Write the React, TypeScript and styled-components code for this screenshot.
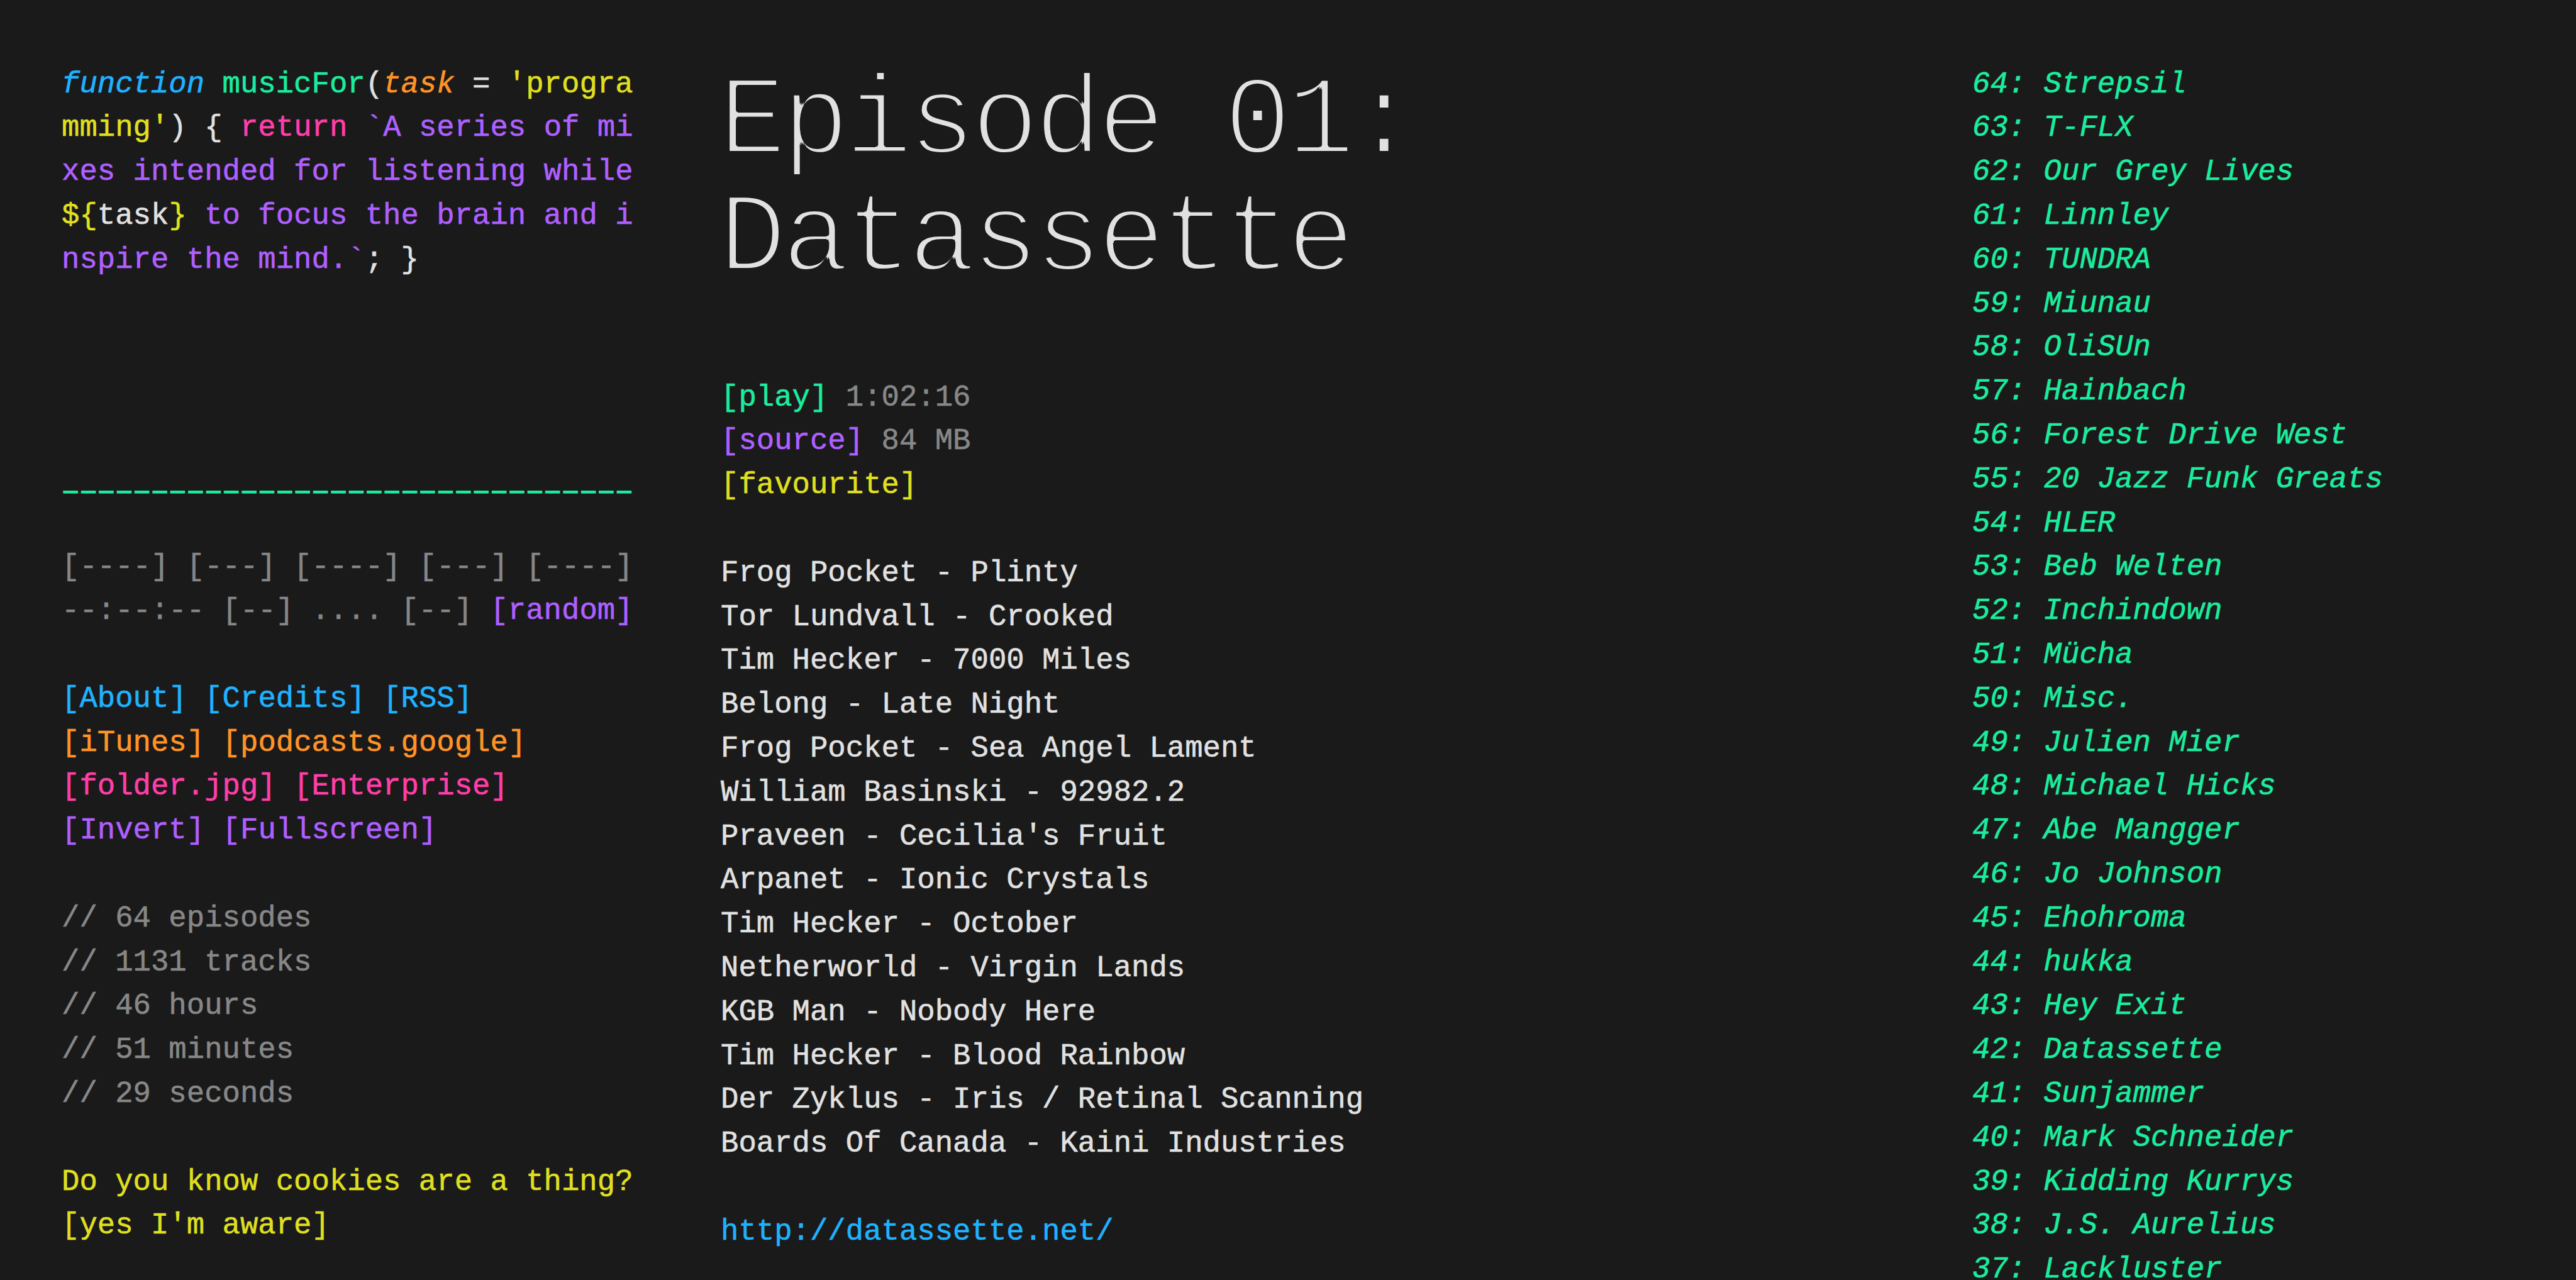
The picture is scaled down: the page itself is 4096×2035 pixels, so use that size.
import React from 'react';
import styled, { createGlobalStyle, css } from 'styled-components';

const colors = {
  bg: '#1a1a1a',
  fg: '#e1e1e1',
  grey: '#878787',
  green: '#1bec9f',
  blue: '#1fb2ff',
  orange: '#ff9326',
  yellow: '#dfdf20',
  purple: '#af5fff',
  pink: '#ff3ea9',
};

type Tone = keyof typeof colors;

const GlobalStyle = createGlobalStyle`
  body {
    margin: 0;
    background: ${colors.bg};
    overflow: hidden;
  }
`;

const Page = styled.main`
  display: grid;
  grid-template-columns: 912px 1854px 1fr;
  column-gap: 136px;
  box-sizing: border-box;
  width: 4096px;
  height: 2035px;
  padding: 99.6px 0 0 98px;
  overflow: hidden;
  background: ${colors.bg};
  color: ${colors.fg};
  font-family: 'Liberation Mono', monospace;
  font-size: 47.32px;
  line-height: 69.8px;
  white-space: pre;
  -webkit-text-stroke: 0.6px currentColor;
`;

const Column = styled.section`
  display: flex;
  flex-direction: column;
`;

const Block = styled.div<{ $tone?: Tone; $gap?: number }>`
  color: ${({ $tone = 'fg' }) => colors[$tone]};
  margin-bottom: ${({ $gap = 69.8 }) => $gap}px;
`;

const Line = styled.div`
  height: 69.8px;
`;

const Tint = styled.span<{ $tone: Tone; $italic?: boolean }>`
  color: ${({ $tone }) => colors[$tone]};
  ${({ $italic }) =>
    $italic &&
    css`
      font-style: italic;
    `}
`;

const Link = styled.a<{ $tone: Tone }>`
  color: ${({ $tone }) => colors[$tone]};
  cursor: pointer;
`;

const Rule = styled.div`
  height: 69.8px;
  margin: 287.2px 0 61.8px;
  color: ${colors.green};
  font-size: 34px;
  letter-spacing: 7.99px;
  text-indent: 4px;
  -webkit-text-stroke: 3px ${colors.green};
`;

const Title = styled.h1`
  margin: 3px 0 122px -4px;
  font-size: 180px;
  font-weight: 400;
  line-height: 186.5px;
  letter-spacing: -7.6px;
  -webkit-text-stroke: 0;
  filter: url(#hairline);
`;

const HiddenDefs = styled.svg`
  position: absolute;
  width: 0;
  height: 0;
`;

const EpisodeList = styled.ol`
  margin: 0;
  padding: 0;
  list-style: none;
  color: ${colors.green};
  font-style: italic;
`;

const Episode = styled.li`
  height: 69.8px;
`;

const tracks = [
  'Frog Pocket - Plinty',
  'Tor Lundvall - Crooked',
  'Tim Hecker - 7000 Miles',
  'Belong - Late Night',
  'Frog Pocket - Sea Angel Lament',
  'William Basinski - 92982.2',
  "Praveen - Cecilia's Fruit",
  'Arpanet - Ionic Crystals',
  'Tim Hecker - October',
  'Netherworld - Virgin Lands',
  'KGB Man - Nobody Here',
  'Tim Hecker - Blood Rainbow',
  'Der Zyklus - Iris / Retinal Scanning',
  'Boards Of Canada - Kaini Industries',
];

const episodes = [
  'Strepsil',
  'T-FLX',
  'Our Grey Lives',
  'Linnley',
  'TUNDRA',
  'Miunau',
  'OliSUn',
  'Hainbach',
  'Forest Drive West',
  '20 Jazz Funk Greats',
  'HLER',
  'Beb Welten',
  'Inchindown',
  'Mücha',
  'Misc.',
  'Julien Mier',
  'Michael Hicks',
  'Abe Mangger',
  'Jo Johnson',
  'Ehohroma',
  'hukka',
  'Hey Exit',
  'Datassette',
  'Sunjammer',
  'Mark Schneider',
  'Kidding Kurrys',
  'J.S. Aurelius',
  'Lackluster',
];

const stats = ['64 episodes', '1131 tracks', '46 hours', '51 minutes', '29 seconds'];

const menu: { tone: Tone; items: string[] }[] = [
  { tone: 'blue', items: ['About', 'Credits', 'RSS'] },
  { tone: 'orange', items: ['iTunes', 'podcasts.google'] },
  { tone: 'pink', items: ['folder.jpg', 'Enterprise'] },
  { tone: 'purple', items: ['Invert', 'Fullscreen'] },
];

// roughly a circle of radius 3.5
const offsets = [
  [4, 0],
  [-3, 0],
  [0, 3],
  [0, -4],
  [3, 2],
  [3, -3],
  [-2, 2],
  [-2, -3],
];

// keeps only what all the shifted copies share, which thins the letters evenly
const HairlineFilter: React.FC = () => (
  <HiddenDefs aria-hidden="true">
    <filter id="hairline" x="0" y="0" width="100%" height="100%" colorInterpolationFilters="sRGB">
      {offsets.map(([dx, dy], i) => (
        <React.Fragment key={i}>
          <feOffset in="SourceGraphic" dx={dx} dy={dy} result={`shift${i}`} />
          <feComposite
            in={i === 0 ? 'SourceGraphic' : `thin${i - 1}`}
            in2={`shift${i}`}
            operator="in"
            result={`thin${i}`}
          />
        </React.Fragment>
      ))}
    </filter>
  </HiddenDefs>
);

const Intro: React.FC = () => (
  <Block $gap={0}>
    <Line>
      <Tint $tone="blue" $italic>function</Tint> <Tint $tone="green">musicFor</Tint>(
      <Tint $tone="orange" $italic>task</Tint> = <Tint $tone="yellow">'progra</Tint>
    </Line>
    <Line>
      <Tint $tone="yellow">mming'</Tint>) {'{'} <Tint $tone="pink">return</Tint>{' '}
      <Tint $tone="purple">`A series of mi</Tint>
    </Line>
    <Line>
      <Tint $tone="purple">xes intended for listening while</Tint>
    </Line>
    <Line>
      <Tint $tone="yellow">{'${'}</Tint>task<Tint $tone="yellow">{'}'}</Tint>
      <Tint $tone="purple"> to focus the brain and i</Tint>
    </Line>
    <Line>
      <Tint $tone="purple">nspire the mind.`</Tint>; {'}'}
    </Line>
  </Block>
);

const App: React.FC = () => (
  <>
    <GlobalStyle />
    <HairlineFilter />
    <Page>
      <Column>
        <Intro />
        <Rule>{'_'.repeat(32)}</Rule>
        <Block $tone="grey">
          <Line>[----] [---] [----] [---] [----]</Line>
          <Line>
            --:--:-- [--] .... [--] <Link $tone="purple">[random]</Link>
          </Line>
        </Block>
        <Block>
          {menu.map(({ tone, items }) => (
            <Line key={tone}>
              {items.map((item, i) => (
                <Link key={item} $tone={tone}>
                  {i > 0 && ' '}[{item}]
                </Link>
              ))}
            </Line>
          ))}
        </Block>
        <Block $tone="grey">
          {stats.map((stat) => (
            <Line key={stat}>// {stat}</Line>
          ))}
        </Block>
        <Block $tone="yellow">
          <Line>Do you know cookies are a thing?</Line>
          <Line>[yes I'm aware]</Line>
        </Block>
      </Column>

      <Column>
        <Title>{'Episode 01:\nDatassette'}</Title>
        <Block $tone="grey">
          <Line>
            <Link $tone="green">[play]</Link> 1:02:16
          </Line>
          <Line>
            <Link $tone="purple">[source]</Link> 84 MB
          </Line>
          <Line>
            <Link $tone="yellow">[favourite]</Link>
          </Line>
        </Block>
        <Block>
          {tracks.map((track) => (
            <Line key={track}>{track}</Line>
          ))}
        </Block>
        <Line>
          <Link $tone="blue">http://datassette.net/</Link>
        </Line>
      </Column>

      <EpisodeList>
        {episodes.map((name, i) => (
          <Episode key={name}>
            {64 - i}: {name}
          </Episode>
        ))}
      </EpisodeList>
    </Page>
  </>
);

export default App;
